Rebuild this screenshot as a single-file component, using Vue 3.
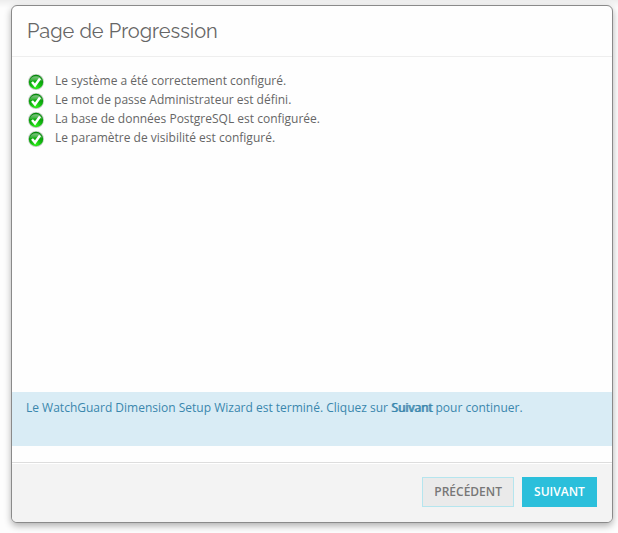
<script setup>
import { ref } from 'vue';

// Étapes terminées par l'assistant
const steps = ref([
  { id: 'system', label: 'Le système a été correctement configuré.' },
  { id: 'password', label: 'Le mot de passe Administrateur est défini.' },
  { id: 'database', label: 'La base de données PostgreSQL est configurée.' },
  { id: 'visibility', label: 'Le paramètre de visibilité est configuré.' }
]);
</script>

<template>
  <main class="page">
    <section class="wizard">
      <header class="wizard-header">
        <h1>Page de Progression</h1>
      </header>

      <ul class="steps">
        <li v-for="step in steps" :key="step.id" class="step">
          <svg class="check" viewBox="0 0 16 16" aria-hidden="true">
            <defs>
              <radialGradient :id="'ball-' + step.id" cx="50%" cy="90%" r="80%">
                <stop offset="0" stop-color="#2ef01a" />
                <stop offset="0.5" stop-color="#10b60e" />
                <stop offset="1" stop-color="#078a0c" />
              </radialGradient>
              <linearGradient :id="'shine-' + step.id" x1="0" y1="0" x2="0" y2="1">
                <stop offset="0" stop-color="#fff" stop-opacity="0.5" />
                <stop offset="1" stop-color="#fff" stop-opacity="0.1" />
              </linearGradient>
            </defs>
            <circle cx="8" cy="8" r="8" fill="#c3cfc3" />
            <circle cx="8" cy="8" r="7.2" :fill="`url(#ball-${step.id})`" />
            <path d="M1.7 7.4a6.4 6.2 0 0 1 12.6 0Q8 5.6 1.7 7.4z" :fill="`url(#shine-${step.id})`" />
            <path d="M4 8l3 3.4 5-6.8" fill="none" stroke="#fff" stroke-width="2.5" />
          </svg>
          <span>{{ step.label }}</span>
        </li>
      </ul>

      <p class="notice">
        Le WatchGuard Dimension Setup Wizard est terminé. Cliquez sur <strong>Suivant</strong> pour continuer.
      </p>

      <footer class="wizard-footer">
        <button type="button" class="btn">PRÉCÉDENT</button>
        <button type="button" class="btn primary">SUIVANT</button>
      </footer>
    </section>
  </main>
</template>

<style>
body {
  margin: 0;
  background: #fdfdfd;
}
</style>

<style scoped>
.page {
  box-sizing: border-box;
  display: flex;
  min-height: 100vh;
  padding: 5px 5px 10px 11px;
  background: linear-gradient(#ededed, #fdfdfd 8px);
  font-family: "Open Sans", sans-serif;
  font-size: 12px;
  line-height: 19px;
  color: #666;
}
.wizard {
  flex: 1;
  display: flex;
  flex-direction: column;
  border: 1px solid #8a8a8a;
  border-radius: 6px;
  background: #fefefe;
  box-shadow: 0 3px 7px rgba(0, 0, 0, 0.3);
  overflow: hidden;
}
.wizard-header {
  padding: 10px 15px;
  border-bottom: 1px solid #eee;
}
h1 {
  margin: 0;
  font-family: Raleway, Lato, sans-serif;
  font-size: 20px;
  font-weight: 400;
  line-height: 30px;
}

/* Liste des étapes */
.steps {
  flex: 1;
  margin: 0;
  padding: 14px 16px;
  list-style: none;
}
.step {
  display: flex;
  gap: 11px;
}
.check {
  width: 16px;
  height: 16px;
  margin-top: 3px;
}

.notice {
  min-height: 39px;
  margin: 0 0 16px;
  padding: 6px 14px 9px;
  background: #d9ecf5;
  color: #3a87ad;
}
.notice strong {
  font-weight: 400;
  text-shadow: 1px 0 0 currentColor;
}

/* Boutons de navigation */
.wizard-footer {
  display: flex;
  justify-content: flex-end;
  gap: 8px;
  padding: 14px 15px 15px;
  border-top: 1px solid #ddd;
  background: #f3f3f3;
  box-shadow: inset 0 1px 0 #fff;
}
.btn {
  height: 30px;
  min-width: 75px;
  padding: 0 11px 2px;
  border: 1px solid #b5e5ee;
  background: #eaeaea;
  color: #777;
  font-family: inherit;
  font-size: 12px;
  font-weight: 600;
  cursor: pointer;
}
.btn.primary {
  border-color: #2bbfdb;
  background: #2bbfdb;
  color: #fff;
}
</style>
